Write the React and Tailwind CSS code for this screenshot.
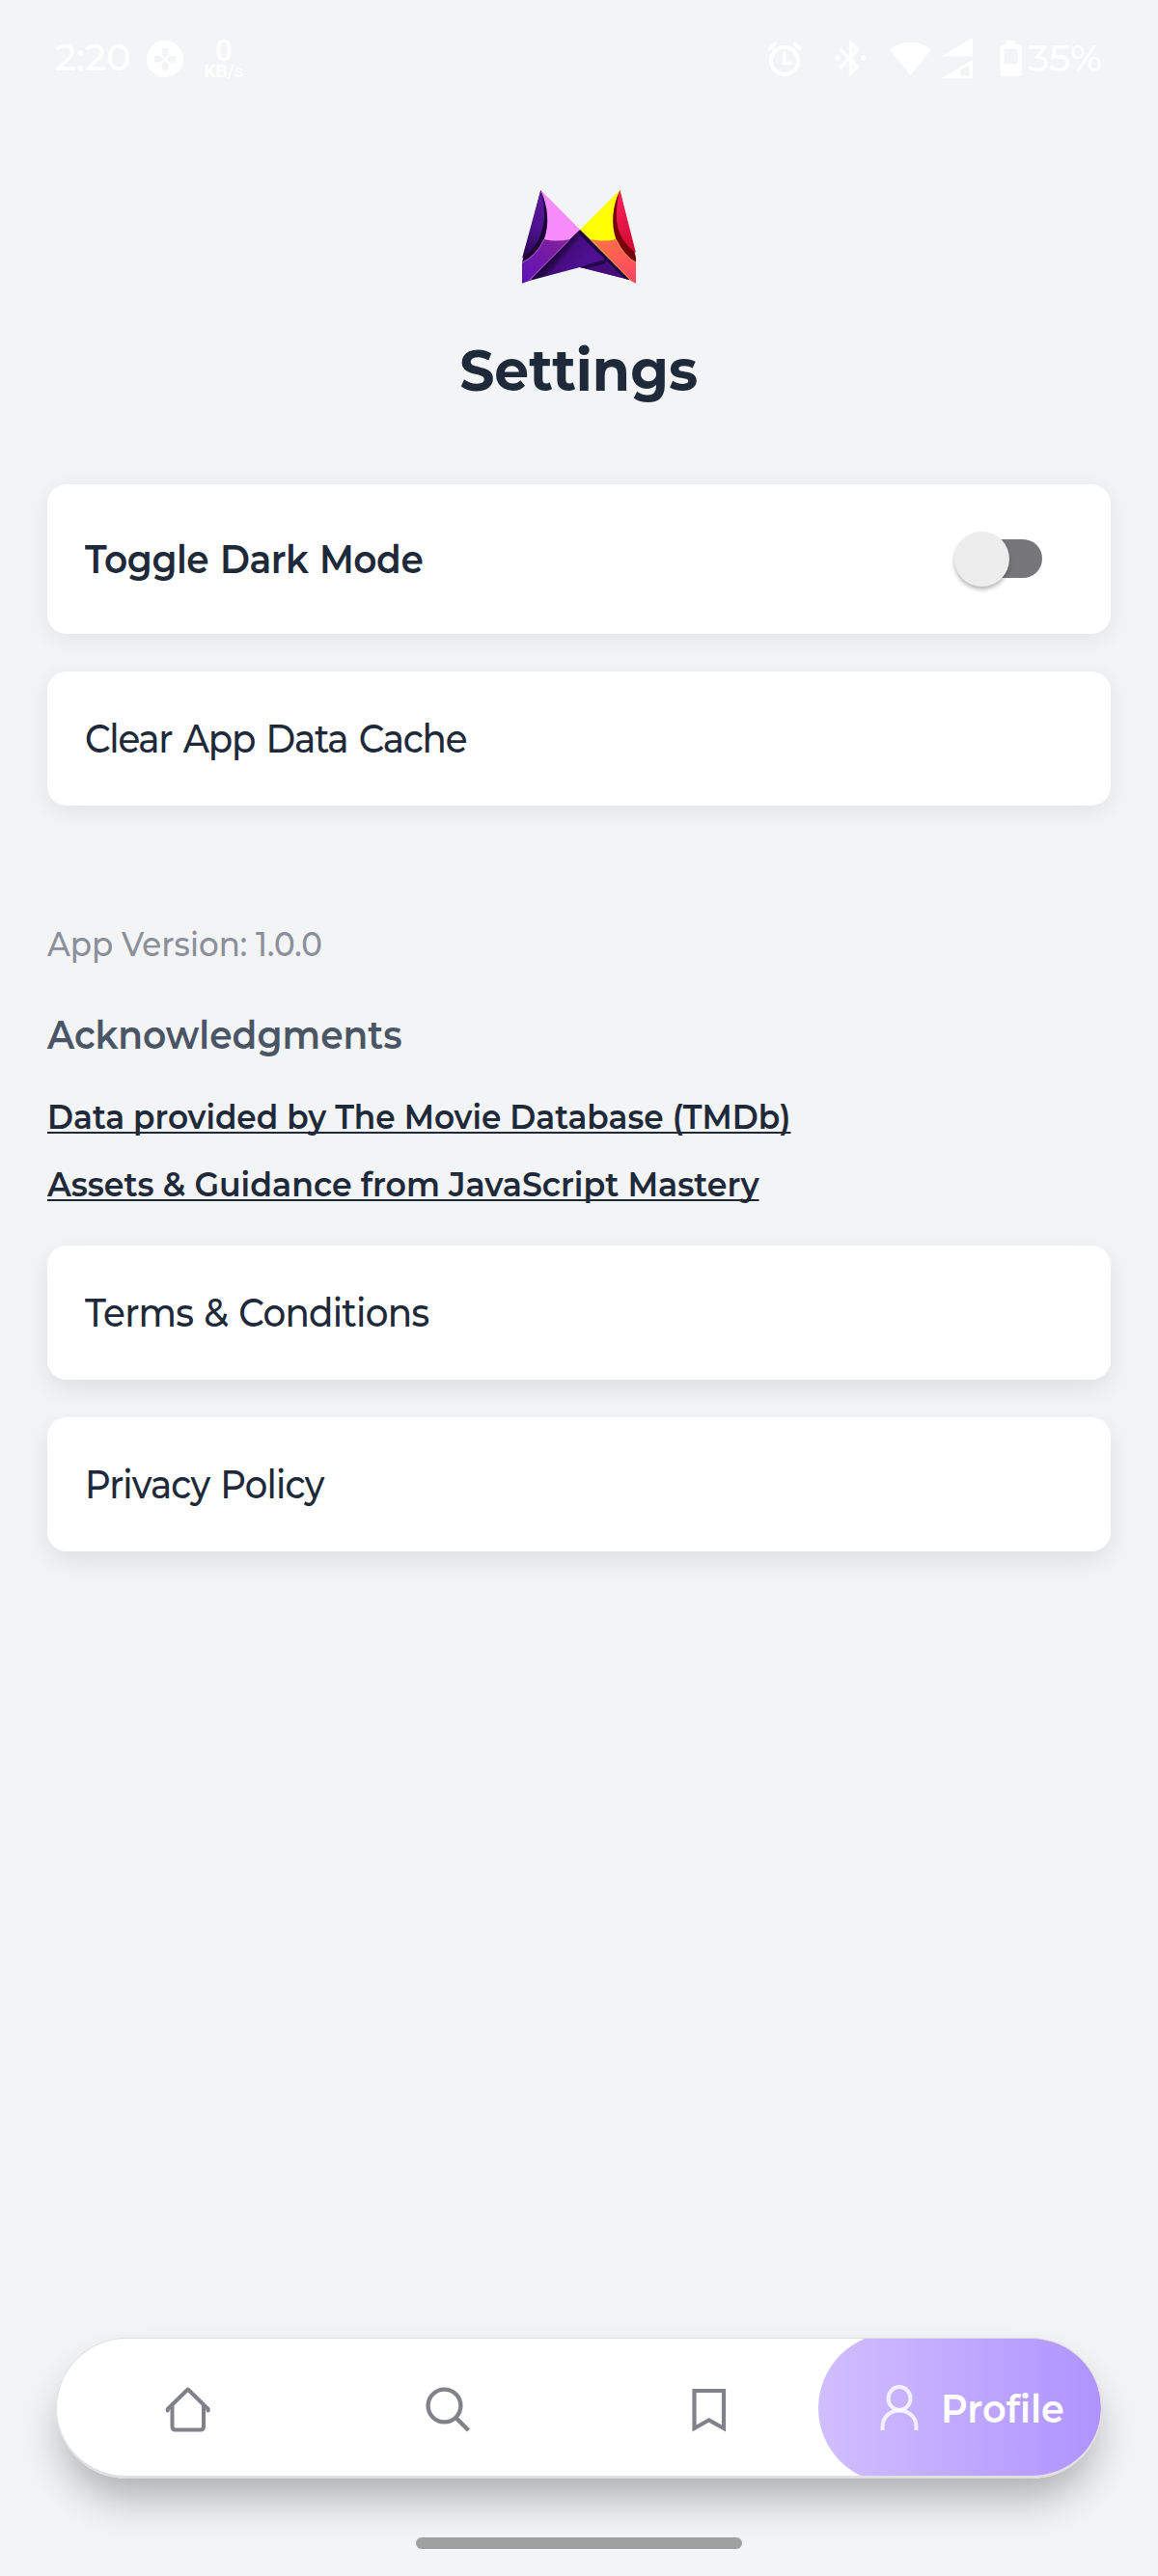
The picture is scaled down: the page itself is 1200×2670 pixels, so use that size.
import React from "react";

function Label({ className = "", children }) {
  return (
    <span className={"inline-block origin-left whitespace-nowrap " + className}>
      {children}
    </span>
  );
}

function StatusBar() {
  return (
    <div className="flex h-[121px] shrink-0 items-center pl-[57px] text-white">
      <span className="w-[95px] text-[38.500px] leading-none font-medium">2:20</span>
      <svg className="h-[38px] w-[38px]" viewBox="0 0 38 38">
        <circle cx="19" cy="19" r="19" fill="#fff" />
        <g fill="#f3f4f6">
          <path d="M15.800 8h6.600v6.400L19.100 17.700l-3.300-3.300z" />
          <path d="M15.800 30.500h6.600V24l-3.300-3.300-3.300 3.300z" />
          <path d="M8 15.900v6.600h6.300l3.300-3.300-3.300-3.300z" />
          <path d="M30.200 15.900v6.600h-6.300l-3.300-3.300 3.300-3.300z" />
        </g>
      </svg>
      <div className="ml-[20px] flex w-[44px] flex-col items-center font-['Roboto',sans-serif]">
        <span className="text-[32px] leading-[26px] font-semibold">0</span>
        <span className="text-[19px] leading-[17px] font-bold">KB/s</span>
      </div>
      <svg className="ml-[541px] h-[37px] w-[37px]" viewBox="0 0 37 37" fill="none" stroke="#fff">
        <circle cx="18" cy="21" r="14" strokeWidth="4" />
        <path d="M18 12.500v11h7.500" strokeWidth="3.600" />
        <path d="M1.500 9.500L9 2.500M35 9.500L27.500 2.500" strokeWidth="4" />
      </svg>
      <svg className="ml-[33px] h-[37px] w-[33px]" viewBox="0 0 33 37">
        <path d="M5 8.500L23.500 27l-7 7V2.500l7 7L5 29" fill="none" stroke="#fff" strokeWidth="3.400" />
        <circle cx="3" cy="18" r="2.700" fill="#fff" />
        <circle cx="29.500" cy="18" r="2.700" fill="#fff" />
      </svg>
      <svg className="ml-[24px] h-[36px] w-[43px]" viewBox="0 0 43 36">
        <path d="M0 8.500C12 -2 31 -2 43 8.500L21.500 35z" fill="#fff" />
      </svg>
      <svg className="ml-[10px] h-[43px] w-[34px]" viewBox="0 0 34 43">
        <path d="M33 0v19.500H0z" fill="#fff" />
        <path d="M33 23v19.500H0z" fill="#fff" />
        <path d="M20 33.500l9.500-5.500v11.500H20z" fill="#f3f4f6" />
      </svg>
      <svg className="ml-[27px] h-[38px] w-[23px]" viewBox="0 0 23 38">
        <path d="M7 0h9v4h4.500q2 0 2 2v29q0 2-2 2H2.500q-2 0-2-2V6q0-2 2-2H7z" fill="#fff" />
        <path d="M4.500 8.500h14v15.500h-14z" fill="#f3f4f6" />
      </svg>
      <span className="ml-[6px] text-[39px] leading-none font-medium">35%</span>
    </div>
  );
}

function Logo() {
  return (
    <svg className="mt-[76px] h-[97px] w-[118px] self-center" viewBox="63 50 354 291">
      <defs>
        <linearGradient id="wing" x1="0.4" y1="0" x2="0.3" y2="1">
          <stop offset="0" stopColor="#5b189c" />
          <stop offset="0.55" stopColor="#4b128c" />
          <stop offset="1" stopColor="#29064f" />
        </linearGradient>
        <linearGradient id="foot" x1="1" y1="0" x2="0" y2="1">
          <stop offset="0" stopColor="#87219a" />
          <stop offset="1" stopColor="#5c12b8" />
        </linearGradient>
        <linearGradient id="core" gradientUnits="userSpaceOnUse" x1="150" y1="262" x2="210" y2="312">
          <stop offset="0" stopColor="#1c0336" />
          <stop offset="0.2" stopColor="#26054d" />
          <stop offset="0.45" stopColor="#460c80" />
          <stop offset="1" stopColor="#4c1090" />
        </linearGradient>
        <linearGradient id="red" x1="0" y1="0" x2="0.2" y2="1">
          <stop offset="0" stopColor="#ff2360" />
          <stop offset="1" stopColor="#d10c35" />
        </linearGradient>
        <linearGradient id="orange" x1="0" y1="0" x2="0.8" y2="1">
          <stop offset="0" stopColor="#ff7843" />
          <stop offset="1" stopColor="#ff4561" />
        </linearGradient>
      </defs>
      <path d="M243 173L400 330L243 290L88 331L160 235z" fill="url(#core)" />
      <path d="M243 290L330 263L400 330z" fill="#430d7a" />
      <path d="M243 290L330 263L318 280L262 294z" fill="#25064a" />
      <path d="M234 182L243 173L400 330L384 326z" fill="#21043f" />
      <path d="M121 50L63 275Q140 240 145 140Q143 90 121 50z" fill="#1d0336" />
      <path d="M121 50L63 262Q122 222 132 140Q133 90 121 50z" fill="url(#wing)" />
      <path d="M121 50L243 173L208 207Q170 212 132 204Q156 130 121 50z" fill="#f98cfb" />
      <path d="M132 203Q170 212 212 203L88 331L63 340V276Q108 254 132 203z" fill="url(#foot)" />
      <path d="M208 207L86 329M63 276Q108 254 132 203" fill="none" stroke="#b95ac9" strokeWidth="3" />
      <path d="M367 50L417 260V276Q350 240 343 150Q343 95 367 50z" fill="#780009" />
      <path d="M367 50L417 245Q365 210 357 145Q354 95 367 50z" fill="url(#red)" />
      <path d="M367 50L243 173L279 207Q315 212 355 204Q331 130 367 50z" fill="#ffff00" />
      <path d="M276 203Q315 212 355 203Q379 254 417 276V341L400 331z" fill="url(#orange)" />
      <path d="M276 204L400 329M355 203Q379 254 417 276" fill="none" stroke="#e8a33c" strokeWidth="3" />
    </svg>
  );
}

function Card({ className = "", children }) {
  return (
    <div className={"flex shrink-0 items-center rounded-[20px] bg-white pl-[39px] text-[41px] text-gray-800 " + className}>
      {children}
    </div>
  );
}

function Switch() {
  return (
    <div className="relative mr-[71px] mb-[1px] ml-auto h-[40px] w-[83px] rounded-full bg-[#777779]">
      <div className="absolute -top-[8px] -left-[8px] h-[57px] w-[57px] rounded-full bg-[#ededed] shadow-[0_3px_4px_rgba(0,0,0,0.28)]" />
    </div>
  );
}

function TabBar() {
  return (
    <nav className="mx-[58px] mb-[61px] flex h-[146px] shrink-0 items-center overflow-hidden rounded-full border-x border-t border-b-[3px] border-[#e0e0e0] bg-white">
      <svg className="mt-[5px] ml-[112px] h-[47px] w-[47px] shrink-0" viewBox="0 0 47 47" fill="none" stroke="#81818a" strokeWidth="4" strokeLinecap="round" strokeLinejoin="round">
        <path d="M2.700 24.500V23L23.700 2.500L44.700 23V24.500M7.500 18.500V41Q7.500 44.500 11 44.500H36.500Q40 44.500 40 41V18.500" />
      </svg>
      <svg className="mt-[5px] ml-[223px] h-[47px] w-[47px] shrink-0" viewBox="0 0 47 47" fill="none" stroke="#81818a" strokeWidth="4.300">
        <circle cx="19.500" cy="19.500" r="16.900" />
        <path d="M31.500 32L44.500 45" strokeWidth="4.500" />
      </svg>
      <svg className="mt-[5px] ml-[229px] h-[46px] w-[36px] shrink-0" viewBox="0 0 36 46" fill="none" stroke="#81818a" strokeWidth="4.200">
        <path d="M2.500 3H33V42L17.700 33.300L2.500 42z" />
      </svg>
      <div className="mt-[2px] ml-[95px] flex h-[156px] w-[293px] shrink-0 items-center rounded-full bg-linear-to-r from-[#d0bfff] to-[#b093ff]">
        <svg className="ml-[64px] h-[48px] w-[40px] shrink-0" viewBox="0 0 40 48" fill="none" stroke="#fff" strokeOpacity="0.8" strokeWidth="4">
          <ellipse cx="20" cy="14" rx="11.500" ry="12" />
          <path d="M2.500 47V44C2.500 20.500 37.500 20.500 37.500 44V47" />
        </svg>
        <Label className="mt-[1px] ml-[23px] scale-x-[0.935] text-[41px] font-semibold text-white">Profile</Label>
      </div>
    </nav>
  );
}

export default function App() {
  return (
    <div className="flex h-[2670px] w-[1200px] flex-col overflow-hidden bg-gray-100 font-['Montserrat','Inter',sans-serif]">
      <StatusBar />
      <Logo />
      <h1 className="mt-[54px] mr-[1px] h-[72px] self-center text-[60px] leading-[72px] font-bold text-gray-800">
        <span className="inline-block scale-x-[0.945]">Settings</span>
      </h1>

      <main className="mx-[49px] mt-[82px] flex flex-col">
        <Card className="h-[155px] shadow-[0_5px_24px_rgba(0,0,0,0.07)]">
          <Label className="scale-x-[0.915] font-semibold tracking-[-0.5px] [word-spacing:2px]">Toggle Dark Mode</Label>
          <Switch />
        </Card>
        <Card className="mt-[39px] h-[139px] shadow-[0_6px_24px_rgba(0,0,0,0.075)]">
          <Label className="scale-x-[0.908] font-medium tracking-[-1.4px] [word-spacing:3px]">Clear App Data Cache</Label>
        </Card>

        <p className="mt-[119px] h-[50px] text-[35px] leading-[50px] font-medium text-[#8b8f99]">
          <Label className="scale-x-[0.93]">App Version: 1.0.0</Label>
        </p>
        <h2 className="mt-[38px] h-[60px] text-[41px] leading-[60px] font-semibold text-gray-600">
          <Label className="scale-x-[0.917]">Acknowledgments</Label>
        </h2>
        <a className="mt-[31px] h-[50px] text-[35px] leading-[50px] font-semibold text-gray-800">
          <Label className="scale-x-[0.935] underline decoration-2 underline-offset-[3px] [text-decoration-skip-ink:none]">
            Data provided by The Movie Database (TMDb)
          </Label>
        </a>
        <a className="mt-[20px] h-[50px] text-[35px] leading-[50px] font-semibold text-gray-800">
          <Label className="scale-x-[0.948] underline decoration-2 underline-offset-[3px] [text-decoration-skip-ink:none]">
            Assets &amp; Guidance from JavaScript Mastery
          </Label>
        </a>

        <Card className="mt-[38px] h-[139px] shadow-[0_10px_26px_rgba(0,0,0,0.085)]">
          <Label className="scale-x-[0.91] font-medium tracking-[-0.8px] [word-spacing:2px]">Terms &amp; Conditions</Label>
        </Card>
        <Card className="mt-[39px] h-[139px] shadow-[0_10px_26px_rgba(0,0,0,0.085)]">
          <Label className="scale-x-[0.903] font-medium tracking-[-0.9px] [word-spacing:2px]">Privacy Policy</Label>
        </Card>
      </main>

      <div className="mt-auto">
        <div className="mx-auto mb-[-146px] h-[146px] w-[1084px] rounded-full shadow-[0_26px_46px_-8px_rgba(0,0,0,0.31)]" />
        <TabBar />
      </div>
      <div className="mb-[28px] h-[12px] w-[338px] shrink-0 self-center rounded-full bg-[#a0a0a1]" />
    </div>
  );
}
